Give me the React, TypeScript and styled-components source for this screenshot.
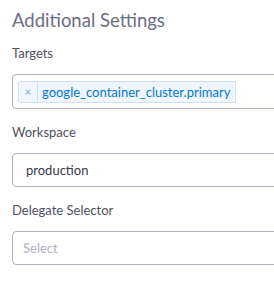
import React from "react";
import styled, { createGlobalStyle } from "styled-components";

const Global = createGlobalStyle`
  html, body { margin: 0; padding: 0; background: #ffffff; overflow: hidden; }
  body { font-family: Lato, "Noto Sans", sans-serif; }
`;

const Panel = styled.div`
  width: 330px;
  padding: 8px 0 0 12px;
  display: flex;
  flex-direction: column;
`;

const Title = styled.h2`
  margin: 0 0 12px 0;
  font-size: 18.5px;
  font-weight: 400;
  line-height: 24px;
  color: #6b6d85;
`;

const Field = styled.div`
  display: flex;
  flex-direction: column;
  margin-bottom: 14px;
`;

const Label = styled.label`
  font-size: 13px;
  line-height: 18px;
  color: #4f5162;
  margin-bottom: 12px;
`;

const Box = styled.div<{ $tall?: boolean }>`
  box-sizing: border-box;
  height: ${(p) => (p.$tall ? "35px" : "34px")};
  border: 1px solid #b0b1c4;
  border-radius: 4px;
  display: flex;
  align-items: center;
  padding: 0 5px;
  background: #fff;
`;

const Value = styled.span<{ $placeholder?: boolean }>`
  font-size: 13px;
  padding-left: ${(p) => (p.$placeholder ? "5px" : "8px")};
  color: ${(p) => (p.$placeholder ? "#b0b1c4" : "#383946")};
`;

const Tag = styled.div`
  display: flex;
  align-items: stretch;
  height: 22px;
  box-sizing: border-box;
  border: 1px solid #cfe1fa;
  background: #f0f6ff;
  border-radius: 2px;
  color: #0278d5;
  font-size: 13px;
`;

const TagRemove = styled.span`
  display: flex;
  align-items: center;
  justify-content: center;
  width: 18px;
  font-size: 11px;
  color: #6aa6e6;
  border-right: 1px solid #cfe1fa;
`;

const TagText = styled.span`
  display: flex;
  align-items: center;
  padding: 0 5px 0 4px;
`;

export default function App() {
  return (
    <>
      <Global />
      <Panel>
        <Title>Additional Settings</Title>
        <Field>
          <Label>Targets</Label>
          <Box $tall>
            <Tag>
              <TagRemove>×</TagRemove>
              <TagText>google_container_cluster.primary</TagText>
            </Tag>
          </Box>
        </Field>
        <Field>
          <Label>Workspace</Label>
          <Box>
            <Value>production</Value>
          </Box>
        </Field>
        <Field>
          <Label>Delegate Selector</Label>
          <Box>
            <Value $placeholder>Select</Value>
          </Box>
        </Field>
      </Panel>
    </>
  );
}
